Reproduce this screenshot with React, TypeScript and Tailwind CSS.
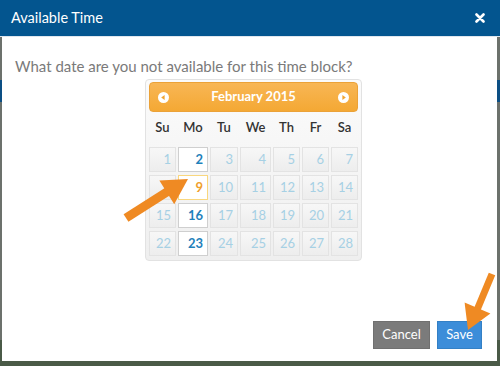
import React from "react";

const days = ["Su", "Mo", "Tu", "We", "Th", "Fr", "Sa"];
const weeks = [
  [1, 2, 3, 4, 5, 6, 7],
  [8, 9, 10, 11, 12, 13, 14],
  [15, 16, 17, 18, 19, 20, 21],
  [22, 23, 24, 25, 26, 27, 28],
];

const CircleArrow = ({ dir }: { dir: "left" | "right" }) => (
  <svg width="11" height="11" viewBox="0 0 11 11">
    <circle cx="5.5" cy="5.5" r="5.5" fill="#fff" />
    {dir === "left" ? (
      <path d="M3.2 5.5 L6.6 3 L6.6 8 Z" fill="#f2a531" />
    ) : (
      <path d="M7.8 5.5 L4.4 3 L4.4 8 Z" fill="#f2a531" />
    )}
  </svg>
);

const DayCell = ({ n }: { n: number }) => {
  const selected = n === 9;
  const monday = n === 2 || n === 16 || n === 23;
  let cls = "bg-[linear-gradient(#f7f7f7,#ededed)] border-[#e3e3e3] text-[#a6d0e4]";
  if (selected) cls = "bg-white border-[#f9d77e] text-[#f0a02c] font-bold";
  else if (monday) cls = "bg-white border-[#cfcfcf] text-[#1f81bb] font-bold";
  return (
    <div className={`h-[25px] border flex items-center justify-end pr-[4px] text-[13px] ${cls}`}>
      {n}
    </div>
  );
};

export default function App() {
  return (
    <div
      className="relative w-[500px] h-[366px] overflow-hidden bg-[linear-gradient(#6c716c_0,#6c716c_80px,#0c4f84_80px,#0c4f84_102px,#6c716c_102px,#6c716c_340px,#4a5a47_340px)]"
      style={{ fontFamily: "Lato, 'Open Sans', sans-serif" }}
    >
      {/* header */}
      <div className="h-[37px] bg-[#03558f] border-b border-[#dfe6ee] flex items-center justify-between pl-[11px] pr-[15px]">
        <span className="text-white text-[14.5px] leading-none">Available Time</span>
        <svg width="10" height="10" viewBox="0 0 10 10">
          <path d="M1.5 1.5 L8.5 8.5 M8.5 1.5 L1.5 8.5" stroke="#fff" strokeWidth="2.6" strokeLinecap="round" />
        </svg>
      </div>

      {/* body */}
      <div className="ml-[2px] mr-[3px] h-[324px] bg-white flex flex-col">
        <p className="pl-[13px] pt-[19px] text-[15px] leading-[20px] text-[#7a7a7a]">
          What date are you not available for this time block?
        </p>

        <div className="ml-[143px] mt-[3px] w-[217px] border border-[#e2e2e2] rounded-[4px] bg-[linear-gradient(#fbfbfb,#efefef)] px-[3px] pt-[2px] pb-[4px]">
          <div className="h-[30px] rounded-[4px] border border-[#eba238] bg-[linear-gradient(#f8b655,#f4a834)] flex items-center justify-between px-[8px]">
            <CircleArrow dir="left" />
            <span className="text-white font-bold text-[13px]">February 2015</span>
            <CircleArrow dir="right" />
          </div>

          <div className="grid grid-cols-[27px_30px_28px_31px_27px_27px_27px] gap-x-[2px] gap-y-[3px]">
            {days.map((d) => (
              <div key={d} className="h-[32px] flex items-center justify-center text-[13px] text-[#333] font-semibold">
                {d}
              </div>
            ))}
            {weeks.flat().map((n) => (
              <DayCell key={n} n={n} />
            ))}
          </div>
        </div>

        <div className="mt-auto mb-[12px] mr-[15px] flex justify-end gap-[7px]">
          <button className="w-[57px] h-[28px] bg-[#7b7b7b] border border-[#707070] text-white text-[13px]">
            Cancel
          </button>
          <button className="w-[45px] h-[28px] bg-[#3c8dd9] border border-[#3380c5] text-white text-[13px]">
            Save
          </button>
        </div>
      </div>

      {/* annotation arrows */}
      <svg className="absolute inset-0 pointer-events-none" width="500" height="366" viewBox="0 0 500 366">
        <line x1="126" y1="218" x2="170" y2="190" stroke="#ef8a23" strokeWidth="9" />
        <polygon points="188,179 174.2,204.2 159.4,180.4" fill="#ef8a23" />
        <line x1="492" y1="274" x2="477" y2="310" stroke="#ef8a23" strokeWidth="7" />
        <polygon points="468,330 490.4,313.5 464.6,302.5" fill="#ef8a23" />
      </svg>
    </div>
  );
}
